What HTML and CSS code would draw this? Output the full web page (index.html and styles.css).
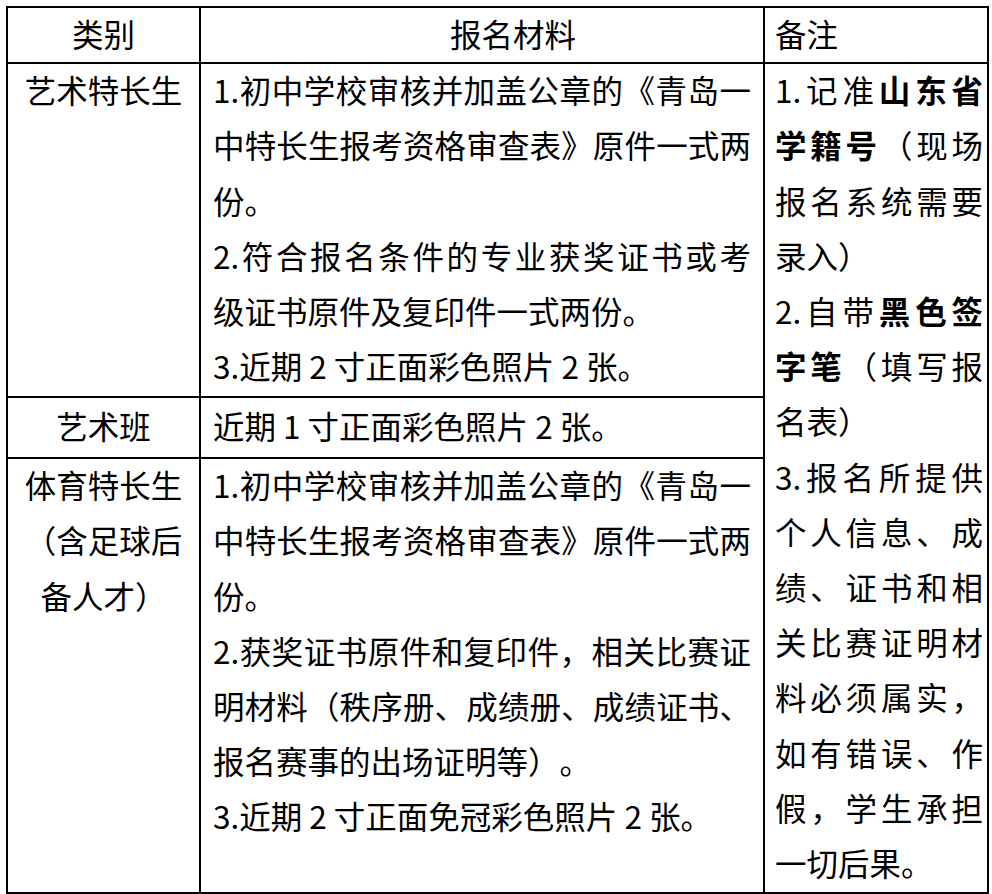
FILE: index.html
```html
<!DOCTYPE html>
<html lang="zh-CN">
<head>
<meta charset="utf-8">
<title>报名材料</title>
<link rel="stylesheet" href="styles.css">
</head>
<body>
<table class="sheet">
  <tr class="row-head">
    <th class="c-cat">类别</th>
    <th class="c-mat head-mat">报名材料</th>
    <th class="c-note head-note">备注</th>
  </tr>
  <tr class="row-art">
    <td class="c-cat">
      <span class="ln">艺术特长生</span>
    </td>
    <td class="c-mat">
      <span class="ln full">1.初中学校审核并加盖公章的《青岛一</span>
      <span class="ln full">中特长生报考资格审查表》原件一式两</span>
      <span class="ln">份。</span>
      <span class="ln full">2.符合报名条件的专业获奖证书或考</span>
      <span class="ln">级证书原件及复印件一式两份。</span>
      <span class="ln">3.近期 2 寸正面彩色照片 2 张。</span>
    </td>
    <td class="c-note" rowspan="3">
      <span class="ln full">1.记准<b>山东省</b></span>
      <span class="ln full"><b>学籍号</b>（现场</span>
      <span class="ln full">报名系统需要</span>
      <span class="ln">录入）</span>
      <span class="ln full">2.自带<b>黑色签</b></span>
      <span class="ln full"><b>字笔</b>（填写报</span>
      <span class="ln">名表）</span>
      <span class="ln full">3.报名所提供</span>
      <span class="ln full">个人信息、成</span>
      <span class="ln full">绩、证书和相</span>
      <span class="ln full">关比赛证明材</span>
      <span class="ln full">料必须属实，</span>
      <span class="ln full">如有错误、作</span>
      <span class="ln full">假，学生承担</span>
      <span class="ln">一切后果。</span>
    </td>
  </tr>
  <tr class="row-class">
    <td class="c-cat mid">艺术班</td>
    <td class="c-mat mid">近期 1 寸正面彩色照片 2 张。</td>
  </tr>
  <tr class="row-sport">
    <td class="c-cat">
      <span class="ln">体育特长生</span>
      <span class="ln">（含足球后</span>
      <span class="ln">备人才）</span>
    </td>
    <td class="c-mat">
      <span class="ln full">1.初中学校审核并加盖公章的《青岛一</span>
      <span class="ln full">中特长生报考资格审查表》原件一式两</span>
      <span class="ln">份。</span>
      <span class="ln full">2.获奖证书原件和复印件，相关比赛证</span>
      <span class="ln full">明材料（秩序册、成绩册、成绩证书、</span>
      <span class="ln">报名赛事的出场证明等）。</span>
      <span class="ln">3.近期 2 寸正面免冠彩色照片 2 张。</span>
    </td>
  </tr>
</table>
</body>
</html>
```

FILE: styles.css
```css
html, body {
  margin: 0;
  background: #fff;
}

body {
  padding: 6px 0 0 6px;
  font-family: "Noto Sans CJK SC", "Noto Sans", sans-serif;
  color: #000;
}

.sheet {
  border-collapse: separate;
  border-spacing: 0;
  table-layout: fixed;
  width: 983px;
  border-top: 2px solid #000;
  border-left: 2px solid #000;
  font-size: 31.5px;
  line-height: 50.2px;
  text-spacing-trim: space-all;
}

.sheet th,
.sheet td {
  box-sizing: border-box;
  border-right: 2px solid #000;
  border-bottom: 2px solid #000;
  vertical-align: top;
  font-weight: 400;
}

.sheet b {
  font-weight: 700;
}

.c-cat {
  width: 193px;
  padding: 0 12px;
  text-align: center;
}

.c-mat {
  width: 564px;
  padding: 0 12px;
  text-align: left;
}

.c-note {
  width: 224px;
  padding: 0 4px 0 10px;
  text-align: left;
}

.row-head th {
  height: 55px;
  vertical-align: middle;
  padding-bottom: 4px;
}

.head-mat {
  text-align: center;
  padding-left: 74px;
}

.head-note {
  text-align: left;
}

.row-art td {
  height: 334px;
}

.row-class td {
  height: 61px;
}

.row-sport td {
  height: 435px;
}

.sheet .mid {
  vertical-align: middle;
  padding-bottom: 5px;
}

.ln {
  display: block;
  white-space: nowrap;
  padding-bottom: 5px;
}

.ln.full {
  text-align: justify;
  text-align-last: justify;
}
```
